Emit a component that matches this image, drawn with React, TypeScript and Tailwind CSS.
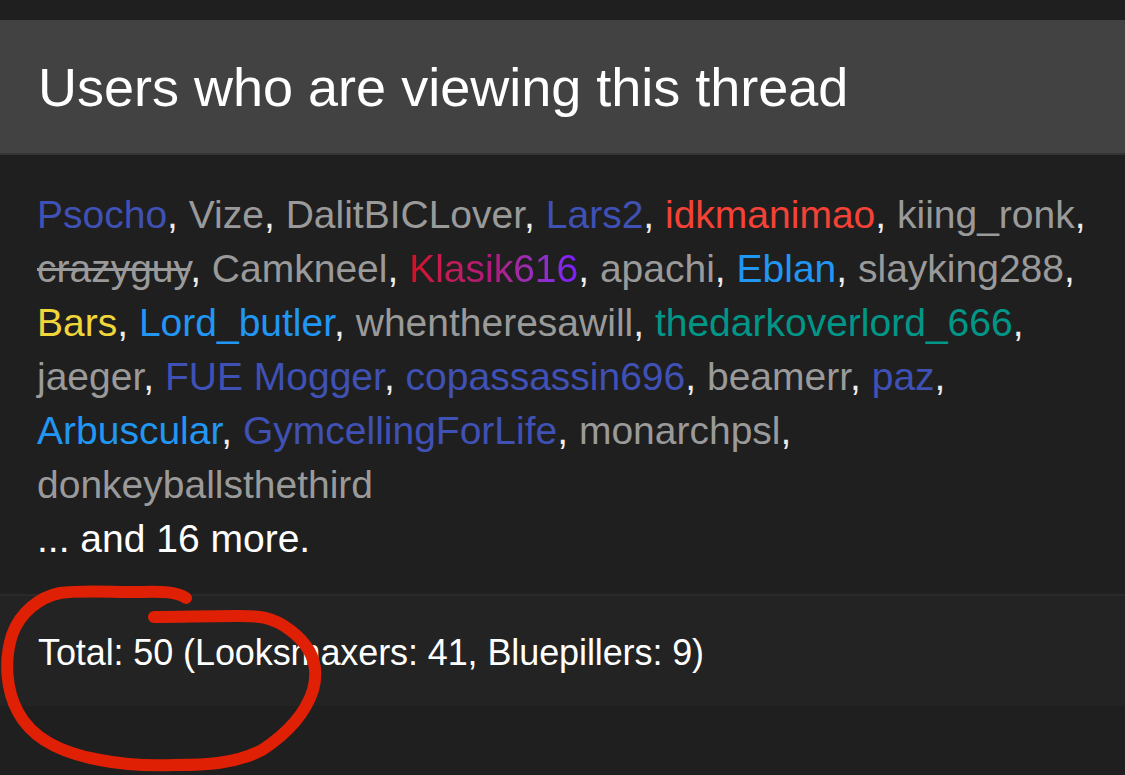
import React from "react";

type U = { n: string; c: string; s?: boolean; g?: boolean };

const IND = "text-[#3f51b5]";
const GRY = "text-[#9a9a9a]";
const BLU = "text-[#2196f3]";

const lines: U[][] = [
  [
    { n: "Psocho", c: IND },
    { n: "Vize", c: GRY },
    { n: "DalitBICLover", c: GRY },
    { n: "Lars2", c: IND },
    { n: "idkmanimao", c: "text-[#f44336]" },
    { n: "kiing_ronk", c: GRY },
  ],
  [
    { n: "crazyguy", c: GRY, s: true },
    { n: "Camkneel", c: GRY },
    { n: "Klasik616", c: "", g: true },
    { n: "apachi", c: GRY },
    { n: "Eblan", c: BLU },
    { n: "slayking288", c: GRY },
  ],
  [
    { n: "Bars", c: "text-[#f1d63a]" },
    { n: "Lord_butler", c: BLU },
    { n: "whentheresawill", c: GRY },
    { n: "thedarkoverlord_666", c: "text-[#009688]" },
  ],
  [
    { n: "jaeger", c: GRY },
    { n: "FUE Mogger", c: IND },
    { n: "copassassin696", c: IND },
    { n: "beamerr", c: GRY },
    { n: "paz", c: IND },
  ],
  [
    { n: "Arbuscular", c: BLU },
    { n: "GymcellingForLife", c: IND },
    { n: "monarchpsl", c: GRY },
  ],
  [{ n: "donkeyballsthethird", c: GRY }],
];

export default function App() {
  const total = lines.length;
  return (
    <div
      className="relative w-[1125px] h-[775px] overflow-hidden bg-[#1f1f1f] text-white"
      style={{ fontFamily: '"Liberation Sans", Arial, sans-serif' }}
    >
      <div className="h-[20px] bg-[#1f1f1f]" />
      <div className="h-[135px] bg-[#424242] flex items-center pl-[38px] border-b-2 border-[#333333]">
        <h1 className="text-[54px] leading-none font-normal">
          Users who are viewing this thread
        </h1>
      </div>
      <div className="pl-[37px] pt-[33px] pb-[28px] text-[39px] leading-[54px] bg-[#1f1f1f]">
        {lines.map((line, li) => (
          <div key={li} className="whitespace-nowrap">
            {line.map((u, i) => {
              const last = li === total - 1 && i === line.length - 1;
              return (
                <React.Fragment key={u.n}>
                  {u.g ? (
                    <span className="bg-gradient-to-r from-[#d50e1e] via-[#b0187e] to-[#7a1bff] bg-clip-text text-transparent">
                      {u.n}
                    </span>
                  ) : (
                    <span className={u.c + (u.s ? " line-through" : "")}>{u.n}</span>
                  )}
                  {!last && <span className="text-[#ededed]">,</span>}
                  {i < line.length - 1 && " "}
                </React.Fragment>
              );
            })}
          </div>
        ))}
        <div className="text-white">... and 16 more.</div>
      </div>
      <div className="h-[112px] bg-[#232323] border-t-2 border-[#2a2a2a] flex items-center pl-[38px] pt-[4px]">
        <div className="text-[36px] leading-none tracking-[-0.1px] text-white">
          Total: 50 (Looksmaxers: 41, Bluepillers: 9)
        </div>
      </div>
      <svg
        className="absolute left-0 top-0 pointer-events-none"
        width="1125"
        height="775"
        viewBox="0 0 1125 775"
      >
        <path
          d="M186,598 C175,590 155,592 133,592 C110,592 80,590 60,593 C40,597 20,612 12,635 C4,660 6,690 18,712 C30,735 55,752 100,760 C125,765 150,766 175,765 C205,765 235,764 262,750 C285,735 305,715 313,690 C320,665 310,645 290,630 C270,615 255,616 235,616 C205,616 180,617 154,617"
          fill="none"
          stroke="#df2005"
          strokeWidth="12"
          strokeLinecap="round"
          strokeLinejoin="round"
        />
      </svg>
    </div>
  );
}
